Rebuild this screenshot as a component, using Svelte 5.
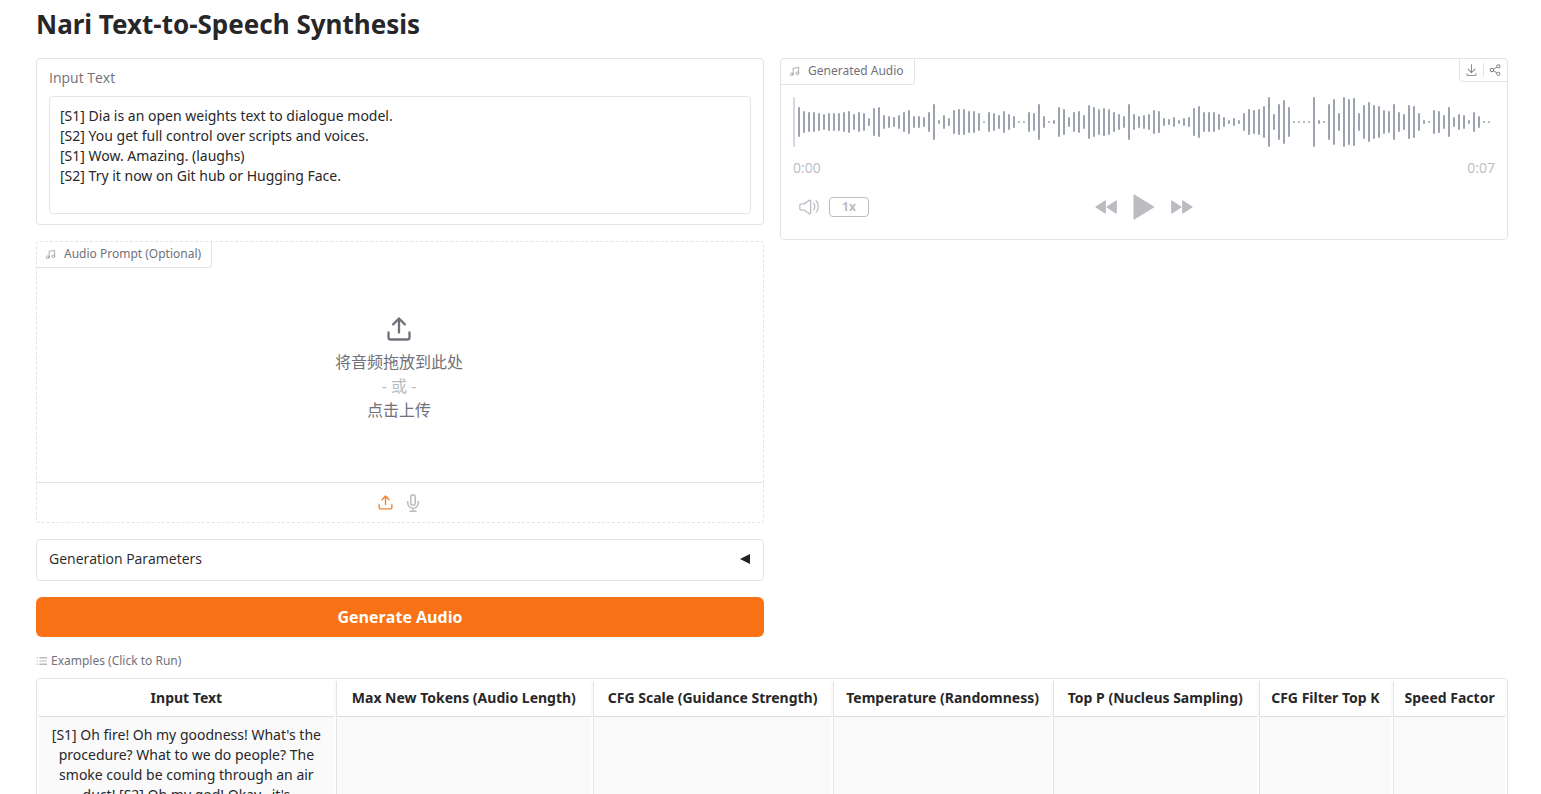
<script>
  const bars = [
    30, 22, 20, 20, 18, 16, 18, 18, 18, 20, 22, 16, 20, 18, 8, 28, 30, 14, 12, 10, 14, 20, 24, 12, 12, 10, 20, 36, 4, 14,
    8, 24, 26, 26, 22, 22, 18, 2, 20, 18, 14, 22, 16, 12, 2, 2, 20, 18, 36, 12, 2, 4, 30, 26, 10, 20, 22, 14, 34, 30,
    26, 28, 26, 20, 16, 12, 36, 16, 12, 14, 16, 24, 22, 8, 6, 10, 4, 8, 10, 28, 32, 20, 20, 20, 16, 10, 4, 8, 4, 18,
    26, 24, 26, 32, 50, 16, 36, 44, 30, 2, 2, 2, 2, 50, 4, 2, 36, 46, 18, 50, 46, 48, 18, 34, 40, 34, 32, 24, 22, 36,
    20, 16, 34, 32, 18, 4, 2, 24, 22, 14, 30, 10, 16, 14, 4, 20, 12, 2, 2
  ];
  const columns = [
    { name: 'Input Text', share: 298 },
    { name: 'Max New Tokens (Audio Length)', share: 258 },
    { name: 'CFG Scale (Guidance Strength)', share: 241 },
    { name: 'Temperature (Randomness)', share: 220 },
    { name: 'Top P (Nucleus Sampling)', share: 206 },
    { name: 'CFG Filter Top K', share: 134 },
    { name: 'Speed Factor', share: 113 }
  ];
  const total = columns.reduce((sum, c) => sum + c.share, 0);
  let text = $state(
    '[S1] Dia is an open weights text to dialogue model.\n[S2] You get full control over scripts and voices.\n[S1] Wow. Amazing. (laughs)\n[S2] Try it now on Git hub or Hugging Face.'
  );
</script>

{#snippet music()}
  <svg class="music" viewBox="0 0 24 24" fill="none" stroke="currentColor" stroke-width="1.5" stroke-linecap="round" stroke-linejoin="round" aria-hidden="true">
    <path d="M9 18V5l12-2v13" /><circle cx="6" cy="18" r="3" /><circle cx="18" cy="16" r="3" />
  </svg>
{/snippet}

{#snippet upload()}
  <svg viewBox="0 0 24 24" fill="none" stroke="currentColor" stroke-width="2" stroke-linecap="round" stroke-linejoin="round" aria-hidden="true">
    <path d="M21 15v4a2 2 0 0 1-2 2H5a2 2 0 0 1-2-2v-4" /><path d="M17 8l-5-5-5 5M12 3v12" />
  </svg>
{/snippet}

<main>
  <h1>Nari Text-to-Speech Synthesis</h1>

  <div class="columns">
    <section class="stack">
      <div class="card field">
        <label for="input-text">Input Text</label>
        <textarea id="input-text" rows="5" spellcheck="false" bind:value={text}></textarea>
      </div>

      <div class="card prompt">
        <div class="tag">{@render music()}Audio Prompt (Optional)</div>
        <button class="drop">
          {@render upload()}
          <span>将音频拖放到此处</span>
          <span class="or">- 或 -</span>
          <span>点击上传</span>
        </button>
        <div class="sources">
          <button class="active" aria-label="Upload file">{@render upload()}</button>
          <button class="mic" aria-label="Record audio">
            <svg viewBox="0 0 24 24" fill="none" stroke="currentColor" stroke-width="2" stroke-linecap="round" stroke-linejoin="round" aria-hidden="true">
              <path d="M12 1a3 3 0 0 0-3 3v8a3 3 0 0 0 6 0V4a3 3 0 0 0-3-3z" /><path d="M19 10v2a7 7 0 0 1-14 0v-2M12 19v4M8 23h8" />
            </svg>
          </button>
        </div>
      </div>

      <button class="card accordion">
        <span>Generation Parameters</span>
        <svg viewBox="0 0 10 10" aria-hidden="true"><path d="M0 5L10 0V10Z" fill="#222" /></svg>
      </button>

      <button class="primary">Generate Audio</button>
    </section>

    <section class="card player">
      <div class="top">
        <div class="tag">{@render music()}Generated Audio</div>
        <div class="tools">
          <button aria-label="Download">
            <svg viewBox="0 0 32 32" fill="currentColor" aria-hidden="true"><path d="M26 24v4H6v-4H4v4a2 2 0 0 0 2 2h20a2 2 0 0 0 2-2v-4zm0-10l-1.41-1.41L17 20.17V2h-2v18.17l-7.59-7.58L6 14l10 10l10-10z" /></svg>
          </button>
          <button aria-label="Share">
            <svg viewBox="0 0 32 32" fill="currentColor" aria-hidden="true"><path d="M23 20a5 5 0 0 0-3.89 1.89l-7.31-4.57a4.46 4.46 0 0 0 0-2.64l7.31-4.57A5 5 0 1 0 18 7a4.79 4.79 0 0 0 .2 1.32l-7.31 4.57a5 5 0 1 0 0 6.22l7.31 4.57A4.79 4.79 0 0 0 18 25a5 5 0 1 0 5-5Zm0-16a3 3 0 1 1-3 3a3 3 0 0 1 3-3ZM7 19a3 3 0 1 1 3-3a3 3 0 0 1-3 3Zm16 9a3 3 0 1 1 3-3a3 3 0 0 1-3 3Z" /></svg>
          </button>
        </div>
      </div>
      <div class="wave">
        <i class="cursor"></i>
        {#each bars as h}<i style:height="{h}px"></i>{/each}
      </div>
      <div class="times"><time>0:00</time><time>0:07</time></div>
      <div class="controls">
        <div class="left">
          <button class="volume" aria-label="Adjust volume">
            <svg viewBox="0 0 24 24" fill="none" stroke="currentColor" stroke-width="1.5" stroke-linecap="round" stroke-linejoin="round" aria-hidden="true">
              <path d="M1 13.9v-3.8a2 2 0 0 1 2-2h2.9a1 1 0 0 0 .55-.17l6-3.9A1 1 0 0 1 14 4.86v14.28a1 1 0 0 1-1.55.84l-6-3.96a1 1 0 0 0-.55-.16H3a2 2 0 0 1-2-2z" />
              <path d="M17.5 7.5S19 9 19 11.5s-1.5 4-1.5 4M20.5 4.5S23 7 23 11.5s-2.5 7-2.5 7" />
            </svg>
          </button>
          <button class="rate">1x</button>
        </div>
        <div class="transport">
          <button aria-label="Skip backward">
            <svg width="22" height="14" viewBox="0 0 22 14" fill="currentColor" stroke="currentColor" stroke-linejoin="round" aria-hidden="true"><path d="M10.3.7v12.6L.7 7zM21.3.7v12.6L11.7 7z" /></svg>
          </button>
          <button aria-label="Play">
            <svg width="22" height="26" viewBox="0 0 22 26" fill="currentColor" stroke="currentColor" stroke-linejoin="round" aria-hidden="true"><path d="M1 .8L21 13 1 25.2z" /></svg>
          </button>
          <button aria-label="Skip forward">
            <svg width="22" height="14" viewBox="0 0 22 14" fill="currentColor" stroke="currentColor" stroke-linejoin="round" aria-hidden="true"><path d="M.7.7v12.6L10.3 7zM11.7.7v12.6L21.3 7z" /></svg>
          </button>
        </div>
      </div>
    </section>
  </div>

  <div class="caption">
    <svg viewBox="0 0 32 32" fill="currentColor" aria-hidden="true"><path d="M10 6h22v2H10zm0 18h22v2H10zm0-9h22v2H10zm-8 0h3v2H2zm0-9h3v2H2zm0 18h3v2H2z" /></svg>
    Examples (Click to Run)
  </div>
  <div class="table-wrap">
    <table>
      <colgroup>
        {#each columns as c}<col style:width="{(c.share / total) * 100}%" />{/each}
      </colgroup>
      <thead>
        <tr>{#each columns as c}<th>{c.name}</th>{/each}</tr>
      </thead>
      <tbody>
        <tr>
          <td>[S1] Oh fire! Oh my goodness! What's the procedure? What to we do people? The smoke could be coming through an air duct! [S2] Oh my god! Okay.. it's</td>
          <td></td><td></td><td></td><td></td><td></td><td></td>
        </tr>
      </tbody>
    </table>
  </div>
</main>

<style>
  :global(body) { background: #fff; overflow: hidden; }
  :global(#app) { height: 100vh; overflow: hidden; }
  * { box-sizing: border-box; }
  main {
    padding: 4px 33px 0 36px;
    color: #27272a;
    font: 14px/20px "Open Sans", "Noto Sans CJK SC", sans-serif;
  }
  h1 { margin: 0 0 14px; font-size: 26px; line-height: 40px; font-weight: 700; }
  button { margin: 0; padding: 0; border: 0; background: none; font: inherit; color: inherit; cursor: pointer; }
  svg { display: block; flex: none; }
  .columns { display: grid; grid-template-columns: 1fr 1fr; gap: 16px; align-items: start; }
  .stack { display: flex; flex-direction: column; gap: 16px; }
  .card { border: 1px solid #e4e4e7; border-radius: 4px; }
  .field { padding: 9px 12px 10px; }
  label { display: block; margin-bottom: 8px; color: #71717a; }
  textarea {
    display: block; width: 100%; height: 118px; padding: 9px 10px; border: 1px solid #e4e4e7; border-radius: 4px;
    font: inherit; color: inherit; resize: none; outline: none; background: #fff;
  }
  h1, th, textarea, td, .tag, .caption { font-family: "Noto Sans", "Noto Sans CJK SC", sans-serif; }
  .prompt { border-style: dashed; display: flex; flex-direction: column; }
  .tag {
    align-self: flex-start; display: flex; align-items: center; gap: 8px; height: 26px; padding: 0 10px 1px 8px;
    border: solid #e4e4e7; border-width: 0 1px 1px 0; border-radius: 0 0 4px 0;
    font-size: 12px; color: #71717a;
  }
  .music { width: 11px; height: 11px; opacity: 0.8; }
  .drop {
    height: 214px; display: flex; flex-direction: column; align-items: center; padding: 46px 2px 0 0;
    font-size: 16px; line-height: 24px; color: #71717a;
  }
  .drop svg { width: 30px; height: 28px; margin: 1px 0 7px; }
  .or { color: #bbbbc2; }
  .sources {
    display: flex; justify-content: center; align-items: center; gap: 10px; height: 40px;
    padding-right: 2px; border-top: 1px solid #e4e4e7; color: #bbbbc2;
  }
  .sources svg { width: 18px; height: 18px; }
  .sources .active svg { width: 17px; height: 17px; }
  .active { color: #f28432; }
  .accordion {
    display: flex; align-items: center; justify-content: space-between; height: 42px; padding: 0 13px 2px 12px;
    border: 1px solid #e4e4e7;
  }
  .accordion svg { width: 10px; height: 10px; }
  .primary { height: 40px; border-radius: 6px; background: #f97316; color: #fff; font-size: 16px; font-weight: 700; }

  .player { height: 182px; display: flex; flex-direction: column; }
  .top { display: flex; justify-content: space-between; align-items: flex-start; }
  .tools {
    display: flex; align-items: center; height: 23px; border: solid #e4e4e7; border-width: 0 0 1px 1px;
    border-radius: 0 0 0 4px; color: #71717a;
  }
  .tools button { padding: 0 5px; }
  .tools button + button { border-left: 1px solid #e4e4e7; }
  .tools svg { width: 13px; height: 14px; }
  .wave { display: flex; align-items: center; gap: 3px; height: 50px; margin: 12px 12px 0; overflow: hidden; }
  .wave i { flex: none; width: 2px; background: #9ca3af; border-radius: 1px; }
  .wave .cursor { height: 50px; background: #d9d4e4; }
  .times { display: flex; justify-content: space-between; margin: 11px 12px 0; color: #bbbbc2; }
  .controls {
    display: grid; grid-template-columns: 1fr auto 1fr; align-items: center; margin: 16px 12px 0; color: #bbbbc2;
  }
  .left { display: flex; align-items: center; gap: 10px; padding-left: 6px; }
  .volume svg { width: 20px; height: 20px; }
  .rate {
    width: 40px; height: 20px; border: 1px solid #bbbbc2; border-radius: 4px; font-size: 12px; line-height: 18px; font-weight: 700;
  }
  .transport { display: flex; align-items: center; gap: 16px; }

  .caption { display: flex; align-items: center; gap: 4px; margin: 14px 0 7px; font-size: 12px; color: #71717a; }
  .caption svg { width: 11px; height: 12px; }
  .table-wrap { border: 1px solid #e4e4e7; border-radius: 4px; }
  table { width: 100%; table-layout: fixed; border-collapse: separate; border-spacing: 2px 2px; text-align: center; }
  th { height: 35px; padding: 0 0 2px; font-weight: 700; white-space: nowrap; box-shadow: 0 1px 1px #dddde0; }
  td { padding: 7px 8px; vertical-align: top; background: #fafafa; }
  th + th, td + td { border-left: 1px solid #e4e4e7; }
</style>
